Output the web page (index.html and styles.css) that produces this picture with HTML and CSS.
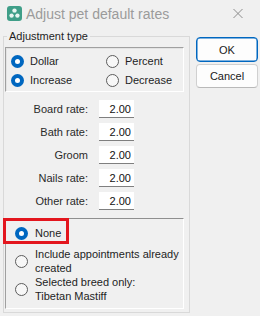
FILE: index.html
```html
<!DOCTYPE html>
<html lang="en">
<head>
    <meta charset="UTF-8">
    <meta name="viewport" content="width=device-width, initial-scale=1.0">
    <title>Adjust pet default rates</title>
    <link rel="stylesheet" href="styles.css">
</head>
<body>

<!-- Window title bar -->
<div class="titlebar">
    <svg class="app-icon" width="15" height="15" viewBox="0 0 15 15">
        <rect x="0" y="0" width="15" height="15" rx="3" fill="#3f9e88"/>
        <circle cx="7.5" cy="4.6" r="2.2" fill="#e8f5f1"/>
        <circle cx="4.6" cy="9.6" r="2.2" fill="#e8f5f1"/>
        <circle cx="10.4" cy="9.6" r="2.2" fill="#e8f5f1"/>
        <circle cx="7.5" cy="7.9" r="1.1" fill="#3f9e88"/>
    </svg>
    <span class="title">Adjust pet default rates</span>
    <svg class="close" width="10" height="11" viewBox="0 0 10 11">
        <path d="M0.5 1 L9.5 10 M9.5 1 L0.5 10" stroke="#8c8c8c" stroke-width="1" fill="none"/>
    </svg>
</div>

<div class="main">
    <fieldset class="group">
        <legend>Adjustment type</legend>

        <!-- Dollar / Percent, Increase / Decrease -->
        <div class="type-box">
            <label class="radio"><span class="dot on"></span>Dollar</label>
            <label class="radio"><span class="dot"></span>Percent</label>
            <label class="radio"><span class="dot on"></span>Increase</label>
            <label class="radio"><span class="dot"></span>Decrease</label>
        </div>

        <!-- Rates -->
        <div class="rates">
            <div class="rate-row"><span class="rate-label">Board rate:</span><input class="rate-input" type="text" value="2.00"></div>
            <div class="rate-row"><span class="rate-label">Bath rate:</span><input class="rate-input" type="text" value="2.00"></div>
            <div class="rate-row"><span class="rate-label">Groom</span><input class="rate-input" type="text" value="2.00"></div>
            <div class="rate-row"><span class="rate-label">Nails rate:</span><input class="rate-input" type="text" value="2.00"></div>
            <div class="rate-row"><span class="rate-label">Other rate:</span><input class="rate-input" type="text" value="2.00"></div>
        </div>

        <!-- Apply to -->
        <div class="apply-box">
            <div class="highlight"></div>
            <label class="radio option"><span class="dot on"></span>None</label>
            <label class="radio option tall"><span class="dot"></span><span>Include appointments already<br>created</span></label>
            <label class="radio option"><span class="dot"></span><span>Selected breed only:<br>Tibetan Mastiff</span></label>
        </div>
    </fieldset>

    <div class="buttons">
        <button class="btn default">OK</button>
        <button class="btn">Cancel</button>
    </div>
</div>

</body>
</html>
```

FILE: styles.css
```css
body { margin: 0; width: 260px; height: 316px; overflow: hidden; background-color: #f0f0f0; font-family: "Liberation Sans", Arial, sans-serif; font-size: 11px; color: #1e1e1e; }

.titlebar { display: flex; align-items: center; height: 27px; padding-left: 7px; }
.app-icon { margin-right: 4px; flex: none; }
.title { font-size: 14px; color: #9b9b9b; }
.close { margin-left: auto; margin-right: 17px; }

.main { display: flex; margin-top: 3px; }

.group { box-sizing: border-box; width: 187px; margin: 0 0 0 3px; padding: 5px 5px 3px 1px; border: 1px solid #d9d9d9; min-width: 0; }
.group legend { margin-left: 2px; padding: 0 2px; line-height: 12px; color: #1e1e1e; }

.type-box { display: grid; grid-template-columns: 95px 1fr; padding: 4px 0 1px 5px; border-top: 1px solid #a0a0a0; border-left: 1px solid #a0a0a0; border-right: 1px solid #fff; border-bottom: 1px solid #fff; box-shadow: inset 1px 1px 0 #e3e3e3; }

.radio { display: flex; align-items: center; line-height: 19px; }
.dot { box-sizing: border-box; width: 13px; height: 13px; margin-right: 6px; border-radius: 50%; border: 1px solid #5c5c5c; background-color: #f7f7f7; display: flex; align-items: center; justify-content: center; flex: none; }
.dot.on { border: none; background-color: #0067c0; }
.dot.on::after { content: ""; width: 5px; height: 5px; border-radius: 50%; background-color: #fff; }

.rates { margin-top: 8px; display: flex; flex-direction: column; gap: 5px; }
.rate-row { display: flex; align-items: center; height: 18px; }
.rate-label { width: 83px; text-align: right; margin-right: 11px; color: #2a2a2a; }
.rate-input { box-sizing: border-box; width: 35px; height: 18px; padding: 0 3px 0 0; border: none; border-bottom: 1px solid #7f7f7f; background-color: #fff; text-align: right; font-family: "Liberation Sans", Arial, sans-serif; font-size: 11px; color: #111; }

.apply-box { position: relative; margin-top: 8px; padding: 7px 0 5px 9px; border-top: 1px solid #8f8f8f; border-left: 1px solid #a0a0a0; border-right: 1px solid #fff; border-bottom: 1px solid #fff; }
.option { line-height: 14px; }
.option .dot { margin-right: 7px; }
.option + .option { margin-top: 7px; }
.option.tall + .option { margin-top: 0; }

/* red annotation frame round "None" */
.highlight { position: absolute; left: -3px; top: -1px; width: 66px; height: 26px; box-sizing: border-box; border: 3px solid #e3161e; }

.buttons { display: flex; flex-direction: column; gap: 2px; width: 62px; margin: 7px 0 0 6px; }
.btn { box-sizing: border-box; height: 24px; padding: 0; border: 1px solid #d0d0d0; border-bottom-color: #b9b9b9; border-radius: 4px; background-color: #fdfdfd; font-family: "Liberation Sans", Arial, sans-serif; font-size: 11px; color: #1a1a1a; }
.btn.default { height: 25px; border: 1px solid #0067c0; box-shadow: inset 0 0 0 0.5px #0067c0; }
```
